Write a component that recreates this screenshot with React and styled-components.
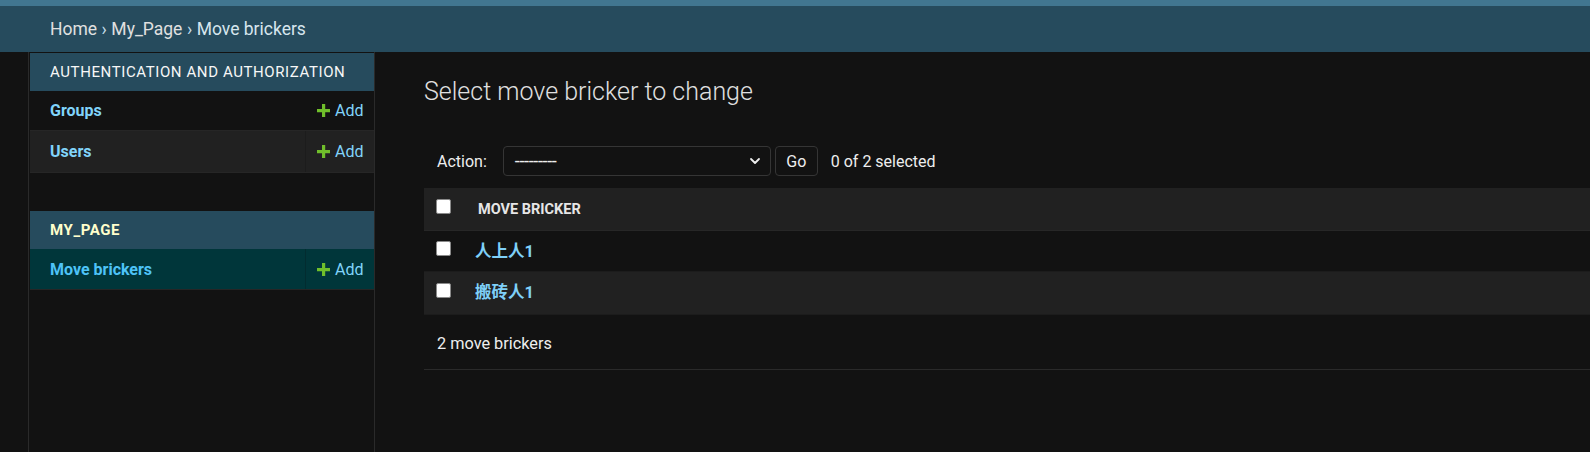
import React from "react";
import styled, { createGlobalStyle } from "styled-components";

const Global = createGlobalStyle`
  html, body { margin: 0; padding: 0; background: #121212; }
  body {
    font-family: Roboto, "Noto Sans CJK SC", "Noto Sans", sans-serif;
    color: #eeeeee;
    font-size: 16px;
    overflow: hidden;
  }
  * { box-sizing: border-box; }
`;

const Page = styled.div`
  width: 1590px;
  height: 452px;
  display: flex;
  flex-direction: column;
  background: #121212;
`;

const TopStrip = styled.div`
  height: 6px;
  background: #417690;
  flex: none;
`;

const Breadcrumbs = styled.nav`
  height: 46px;
  flex: none;
  background: #264b5d;
  padding: 0 50px;
  display: flex;
  align-items: center;
  font-size: 17.5px;
  color: #c4dce8;
  gap: 4.5px;
`;

const Crumb = styled.a`
  color: ${(p) => (p.$current ? "#d6e6ee" : "#e0e0e0")};
  text-decoration: none;
`;

const Main = styled.div`
  flex: 1;
  display: flex;
  min-height: 0;
`;

const ToggleColumn = styled.div`
  width: 29px;
  flex: none;
  border-right: 1px solid #2a2a2a;
`;

const Sidebar = styled.aside`
  width: 346px;
  flex: none;
  border-right: 1px solid #2a2a2a;
  padding: 1px 0 0 1px;
`;

const Module = styled.div`
  margin-bottom: ${(p) => p.$gap || 0}px;
`;

const Caption = styled.div`
  height: 38px;
  background: #264b5d;
  display: flex;
  align-items: center;
  padding-left: 20px;
  font-size: 15px;
  letter-spacing: 0.6px;
  text-transform: uppercase;
  color: ${(p) => (p.$current ? "#ffffcc" : "#f7f7f7")};
  font-weight: ${(p) => (p.$current ? 700 : 400)};
`;

const NavRow = styled.div`
  display: flex;
  height: ${(p) => p.$h || 40}px;
  background: ${(p) => (p.$selected ? "#00363a" : p.$alt ? "#212121" : "#121212")};
  border-bottom: 1px solid #262626;
`;

const NavName = styled.a`
  flex: 1;
  display: flex;
  align-items: center;
  padding-left: 20px;
  font-size: 16px;
  font-weight: 700;
  color: ${(p) => (p.$selected ? "#4ec3f7" : "#81d4fa")};
  text-decoration: none;
`;

const AddCell = styled.a`
  width: 69px;
  flex: none;
  display: flex;
  align-items: center;
  gap: 5px;
  padding-left: 11px;
  border-left: 1px solid ${(p) => (p.$line ? p.$line : "transparent")};
  font-size: 16px;
  color: #81d4fa;
  text-decoration: none;
`;

const Content = styled.main`
  flex: 1;
  padding: 25px 0 0 49px;
  min-width: 0;
`;

const Title = styled.h1`
  margin: 0 0 25px;
  font-size: 25px;
  line-height: 30px;
  font-weight: 300;
  color: #e0e0e0;
`;

const Actions = styled.div`
  display: flex;
  align-items: center;
  padding: 14px 0 12px 13px;
  font-size: 16px;
  color: #eeeeee;
`;

const Label = styled.span`
  margin-right: 16px;
`;

const SelectBox = styled.div`
  width: 268px;
  height: 30px;
  border: 1px solid #353535;
  border-radius: 4px;
  display: flex;
  align-items: center;
  justify-content: space-between;
  padding: 0 8px 0 11px;
  font-size: 16px;
  color: #eeeeee;
  margin-right: 4px;
`;

const Dashes = styled.span`
  font-size: 18px;
  letter-spacing: -0.35px;
  margin-top: -1px;
`;

const GoButton = styled.button`
  height: 30px;
  width: 43px;
  border: 1px solid #353535;
  border-radius: 4px;
  background: #121212;
  color: #eeeeee;
  font-family: inherit;
  font-size: 16px;
  padding: 0;
  margin-right: 13px;
`;

const Table = styled.div`
  display: flex;
  flex-direction: column;
`;

const HeadRow = styled.div`
  display: flex;
  align-items: center;
  height: 43px;
  background: #212121;
  border-bottom: 1px solid #272727;
`;

const Row = styled.div`
  display: flex;
  align-items: center;
  height: ${(p) => p.$h || 41}px;
  background: ${(p) => (p.$alt ? "#212121" : "#121212")};
  border-bottom: 1px solid #1c1c1c;
`;

const CheckCell = styled.div`
  width: 54px;
  flex: none;
  padding-left: 12px;
  display: flex;
  align-items: center;
  margin-top: ${(p) => p.$dy || 0}px;
`;

const Check = styled.span`
  display: block;
  width: 15px;
  height: 15px;
  background: #ffffff;
  border: 1px solid #8a8a8a;
  border-radius: 2px;
`;

const HeadText = styled.span`
  font-size: 14.5px;
  font-weight: 700;
  text-transform: uppercase;
  color: #e6e6e6;
`;

const ItemLink = styled.a`
  font-size: 16.5px;
  font-weight: 700;
  color: #7fd0f8;
  text-decoration: none;
  margin-left: -3px;
  margin-top: ${(p) => p.$dy || -3}px;
`;

const Paginator = styled.div`
  height: 55px;
  display: flex;
  align-items: center;
  padding: 2px 0 0 13px;
  font-size: 16.3px;
  color: #eeeeee;
  border-bottom: 1px solid #2a2a2a;
`;

const Plus = () => (
  <svg width="13" height="13" viewBox="0 0 13 13">
    <path d="M5 0h3.2v5H13v3.2H8.2V13H5V8.2H0V5h5z" fill="#70bf2b" />
  </svg>
);

const Chevron = () => (
  <svg width="14" height="14" viewBox="0 0 14 14">
    <path d="M3 5l4 4 4-4" stroke="#eeeeee" strokeWidth="1.8" fill="none" strokeLinecap="round" strokeLinejoin="round" />
  </svg>
);

export default function App() {
  return (
    <Page>
      <Global />
      <TopStrip />
      <Breadcrumbs>
        <Crumb href="#">Home</Crumb>›<Crumb href="#">My_Page</Crumb>›<Crumb $current>Move brickers</Crumb>
      </Breadcrumbs>
      <Main>
        <ToggleColumn />
        <Sidebar>
          <Module $gap={38}>
            <Caption>Authentication and Authorization</Caption>
            <NavRow $h={40}>
              <NavName href="#">Groups</NavName>
              <AddCell href="#"><Plus />Add</AddCell>
            </NavRow>
            <NavRow $alt $h={42}>
              <NavName href="#">Users</NavName>
              <AddCell href="#" $line="#1c1c1c"><Plus />Add</AddCell>
            </NavRow>
          </Module>
          <Module>
            <Caption $current>My_Page</Caption>
            <NavRow $selected $h={41}>
              <NavName href="#" $selected>Move brickers</NavName>
              <AddCell href="#" $line="#022c30"><Plus />Add</AddCell>
            </NavRow>
          </Module>
        </Sidebar>
        <Content>
          <Title>Select move bricker to change</Title>
          <Actions>
            <Label>Action:</Label>
            <SelectBox>
              <Dashes>---------</Dashes>
              <Chevron />
            </SelectBox>
            <GoButton>Go</GoButton>
            <span>0 of 2 selected</span>
          </Actions>
          <Table>
            <HeadRow>
              <CheckCell $dy={-5}><Check /></CheckCell>
              <HeadText>Move bricker</HeadText>
            </HeadRow>
            <Row>
              <CheckCell $dy={-5}><Check /></CheckCell>
              <ItemLink href="#">人上人1</ItemLink>
            </Row>
            <Row $alt $h={43}>
              <CheckCell $dy={-5}><Check /></CheckCell>
              <ItemLink href="#" $dy={-4}>搬砖人1</ItemLink>
            </Row>
          </Table>
          <Paginator>2 move brickers</Paginator>
        </Content>
      </Main>
    </Page>
  );
}
